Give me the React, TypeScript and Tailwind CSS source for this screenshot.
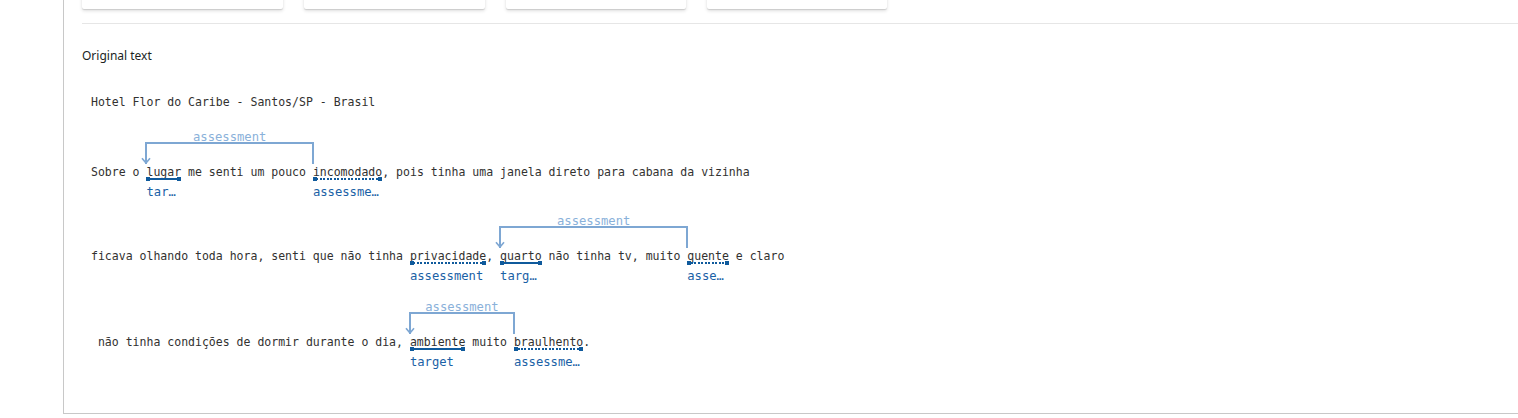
import { ReactNode } from "react";

type Kind = "target" | "assessment";

interface MarkProps {
  word: string;
  kind: Kind;
  label: string;
}

// annotated word: underline plus a short label under it
function Mark({ word, kind, label }: MarkProps) {
  return (
    <span className="relative inline-block leading-[16px]">
      {word}
      <span className="absolute left-0 right-0 top-[13px] h-[4px]">
        {kind === "target" ? (
          <span className="absolute left-0 right-0 top-[1px] h-[2px] bg-[#0f5a9c]" />
        ) : (
          <span className="absolute left-0 right-0 top-[1px] h-[2px] bg-[repeating-linear-gradient(90deg,#0f5a9c_0_2px,transparent_2px_3.5px)]" />
        )}
        <span className="absolute left-0 top-0 h-[4px] w-[4px] bg-[#0f5a9c]" />
        <span className="absolute right-0 top-0 h-[4px] w-[4px] bg-[#0f5a9c]" />
      </span>
      <span className="absolute left-0 top-[21px] whitespace-nowrap font-['DejaVu_Sans_Mono',monospace] text-[12.2px] leading-[14px] text-[#1b61a6]">
        {label}
      </span>
    </span>
  );
}

interface ArcProps {
  from: number;
  to: number;
  label: string;
}

// relation bracket drawn above the line, arrow at the left end
function Arc({ from, to, label }: ArcProps) {
  return (
    <span
      className="absolute top-[-22px] h-[22px] border-x-2 border-t-2 border-[#7ea7d3]"
      style={{ left: `calc(${from}ch - 1px)`, width: `calc(${to - from}ch + 2px)` }}
    >
      <span className="absolute left-0 right-0 top-[-14px] text-center font-['DejaVu_Sans_Mono',monospace] text-[12.2px] leading-[14px] text-[#8ab1da]">
        {label}
      </span>
      <svg
        className="absolute bottom-0 left-[-6px]"
        width="10"
        height="7"
        viewBox="0 0 10 7"
        fill="none"
      >
        <path d="M1 1.2 L5 6 L9 1.2" stroke="#7ea7d3" strokeWidth="1.6" />
      </svg>
    </span>
  );
}

function Row({ children, className }: { children: ReactNode; className?: string }) {
  return (
    <div className={className}>
      <div className="relative whitespace-pre leading-[16px]">{children}</div>
    </div>
  );
}

function Card({ className }: { className: string }) {
  return (
    <div
      className={`h-[49px] shrink-0 rounded-b-[2px] bg-white shadow-[0_1.6px_3.6px_rgba(0,0,0,0.13),0_0.3px_0.9px_rgba(0,0,0,0.11)] ${className}`}
    />
  );
}

export default function App() {
  return (
    <div className="min-h-screen overflow-hidden bg-white font-['Noto_Sans',sans-serif] text-[#323130]">
      <div className="ml-[63px] flow-root h-[414px] w-[1600px] border-b border-l border-[#c8c8c8] pl-[18px]">
        {/* cards scrolled off the top */}
        <div className="-mt-[40px] flex gap-[21px]">
          <Card className="w-[201px]" />
          <Card className="w-[181px]" />
          <Card className="w-[180px]" />
          <Card className="w-[180px]" />
        </div>
        <div className="mt-[14px] border-t border-[#e6e6e6]" />

        <h3 className="mt-[24px] text-[12px] leading-[16px] text-[#201f1e]">Original text</h3>

        <div className="mt-[30px] pl-[9px] font-['DejaVu_Sans_Mono',monospace] text-[11.53px] text-[#323130]">
          <Row>Hotel Flor do Caribe - Santos/SP - Brasil</Row>

          <Row className="mt-[54px]">
            {"Sobre o "}
            <Mark word="lugar" kind="target" label="tar…" />
            {" me senti um pouco "}
            <Mark word="incomodado" kind="assessment" label="assessme…" />
            {", pois tinha uma janela direto para cabana da vizinha"}
            <Arc from={8} to={32} label="assessment" />
          </Row>

          <Row className="mt-[68px]">
            {"ficava olhando toda hora, senti que não tinha "}
            <Mark word="privacidade" kind="assessment" label="assessment" />
            {", "}
            <Mark word="quarto" kind="target" label="targ…" />
            {" não tinha tv, muito "}
            <Mark word="quente" kind="assessment" label="asse…" />
            {" e claro"}
            <Arc from={59} to={86} label="assessment" />
          </Row>

          <Row className="mt-[70px]">
            {" não tinha condições de dormir durante o dia, "}
            <Mark word="ambiente" kind="target" label="target" />
            {" muito "}
            <Mark word="braulhento" kind="assessment" label="assessme…" />
            {"."}
            <Arc from={46} to={61} label="assessment" />
          </Row>
        </div>
      </div>
    </div>
  );
}
